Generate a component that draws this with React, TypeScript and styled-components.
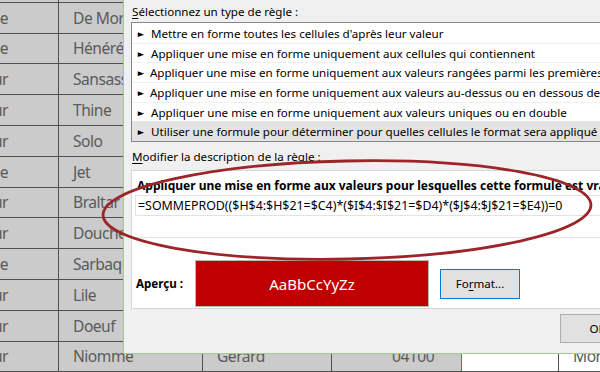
import * as React from 'react';
import styled, { createGlobalStyle } from 'styled-components';

const GlobalStyle = createGlobalStyle`
  html, body {
    margin: 0;
    padding: 0;
    width: 600px;
    height: 372px;
    overflow: hidden;
    background: #fff;
  }
`;

const Screen = styled.div`
  position: relative;
  width: 600px;
  height: 372px;
  overflow: hidden;
  font-family: "Noto Sans", "Open Sans", sans-serif;
`;

// ---- background sheet ----

const Sheet = styled.div`
  display: flex;
  flex-direction: column;
  margin-top: -28px;
`;

const SheetRow = styled.div`
  display: flex;
  height: 30.8px;
  flex: none;
  box-sizing: border-box;
  border-bottom: 1px solid #505050;
`;

const Cell = styled.div<{ $w: number; $white?: boolean; $pad?: number; $right?: boolean; $green?: boolean }>`
  flex: none;
  width: ${(p) => p.$w}px;
  box-sizing: border-box;
  display: flex;
  align-items: center;
  justify-content: ${(p) => (p.$right ? 'flex-end' : 'flex-start')};
  padding: ${(p) => (p.$right ? `0 ${p.$pad ?? 0}px 0 0` : `0 0 0 ${p.$pad ?? 0}px`)};
  overflow: hidden;
  white-space: nowrap;
  background: ${(p) => (p.$white ? '#fff' : '#cbcbcb')};
  border-right: 1px solid ${(p) => (p.$green ? '#3c8a4e' : '#505050')};
  color: #5a5a5a;
  font-size: 15.6px;
  letter-spacing: -0.5px;
`;

// ---- dialog ----

const Dialog = styled.div`
  position: absolute;
  left: 123px;
  top: -1px;
  width: 520px;
  height: 355px;
  box-sizing: border-box;
  background: #f0f0f0;
  border: 1px solid #a3c98c;
  display: flex;
  flex-direction: column;
  color: #000;
  font-size: 11.6px;
`;

const Label = styled.div<{ $h: number }>`
  height: ${(p) => p.$h}px;
  display: flex;
  align-items: center;
  padding-left: 8px;
  white-space: nowrap;
  u { text-decoration-thickness: 1px; text-underline-offset: 2px; }
`;

const ListBox = styled.div`
  margin-left: 7px;
  border: 1px solid #828790;
  border-right: none;
  background: #fff;
  display: flex;
  flex-direction: column;
`;

const ListItem = styled.div<{ $selected?: boolean }>`
  height: 19.7px;
  box-sizing: border-box;
  display: flex;
  align-items: center;
  gap: 5px;
  padding-left: 5px;
  white-space: nowrap;
  background: ${(p) => (p.$selected ? '#e3e3e3' : '#fff')};
  border-top: 1px solid ${(p) => (p.$selected ? '#e3e3e3' : '#f0f0f0')};
  &:first-child { border-top-color: #fff; }
`;

const Arrow = styled.span`
  font-size: 8px;
  width: 9px;
  transform: scaleX(1.3);
`;

const Panel = styled.div`
  margin-left: 7px;
  height: 139px;
  box-sizing: border-box;
  border: 1px solid #d6d6d6;
  border-right: none;
  background: #fff;
  display: flex;
  flex-direction: column;
  padding: 4px 0 0 3px;
`;

const PanelTitle = styled.div`
  font-weight: 700;
  font-size: 12px;
  padding-left: 2px;
  height: 20px;
  display: flex;
  align-items: center;
  white-space: nowrap;
`;

const FormulaInput = styled.div`
  height: 21px;
  box-sizing: border-box;
  border: 1px solid #e2e2e2;
  border-right: none;
  display: flex;
  align-items: center;
  padding-left: 2px;
  white-space: nowrap;
  font-size: 12.4px;
`;

const Rule = styled.div`
  margin-top: 21px;
  margin-left: -3px;
  border-top: 1px solid #e4e4e4;
`;

const PreviewRow = styled.div`
  display: flex;
  align-items: center;
  margin-top: 22px;
`;

const PreviewLabel = styled.div`
  width: 59px;
  font-weight: 700;
  padding-left: 1px;
`;

const Swatch = styled.div`
  width: 234px;
  height: 47px;
  box-sizing: border-box;
  background: #c00000;
  border: 1px solid #b8b8b8;
  color: #fff;
  font-size: 15px;
  display: flex;
  align-items: center;
  justify-content: center;
`;

const Button = styled.div<{ $focused?: boolean }>`
  height: ${(p) => (p.$focused ? 30 : 29)}px;
  width: ${(p) => (p.$focused ? 80 : 75)}px;
  box-sizing: border-box;
  background: #e1e1e1;
  border: 1px solid ${(p) => (p.$focused ? '#0078d7' : '#adadad')};
  box-shadow: ${(p) => (p.$focused ? 'inset 0 0 0 1px #e1e1e1' : 'none')};
  display: flex;
  align-items: center;
  justify-content: center;
  flex: none;
  u { text-decoration-thickness: 1px; text-underline-offset: 2px; }
`;

const FormatButton = styled(Button)`
  margin-left: 11px;
`;

const Footer = styled.div`
  display: flex;
  padding: 5px 0 0 436px;
`;

const Ellipse = styled.svg`
  position: absolute;
  left: 0;
  top: 0;
  pointer-events: none;
`;

const rows: [string, string, string, string, string][] = [
  ['Monsieur', 'Alarue', 'Paul', '13001', 'Marseille'],
  ['Madame', 'De Mortagne', 'Sylvie', '75012', 'Paris'],
  ['Madame', 'Hénérégie', 'Marie', '69003', 'Lyon'],
  ['Monsieur', 'Sansasseur', 'Alain', '31000', 'Toulouse'],
  ['Monsieur', 'Thine', 'Eglan', '06000', 'Nice'],
  ['Monsieur', 'Solo', 'Yvan', '44000', 'Nantes'],
  ['Madame', 'Jet', 'Annie', '67000', 'Strasbourg'],
  ['Monsieur', 'Braltar', 'Gilles', '34000', 'Montpellier'],
  ['Monsieur', 'Douche', 'Jean', '33000', 'Bordeaux'],
  ['Madame', 'Sarbaquane', 'Anne', '59000', 'Lille'],
  ['Monsieur', 'Lile', 'Jacques', '35000', 'Rennes'],
  ['Monsieur', 'Doeuf', 'John', '51100', 'Reims'],
  ['Monsieur', 'Niomme', 'Gerard', '04100', 'Manosque'],
];

const rules = [
  "Mettre en forme toutes les cellules d'après leur valeur",
  'Appliquer une mise en forme uniquement aux cellules qui contiennent',
  'Appliquer une mise en forme uniquement aux valeurs rangées parmi les premières ou les dernières valeurs',
  'Appliquer une mise en forme uniquement aux valeurs au-dessus ou en dessous de la moyenne',
  'Appliquer une mise en forme uniquement aux valeurs uniques ou en double',
  'Utiliser une formule pour déterminer pour quelles cellules le format sera appliqué',
];

const App = () => {
  return (
    <Screen>
      <GlobalStyle />
      <Sheet>
        {rows.map((r, i) => (
          <SheetRow key={i}>
            <Cell $w={59} $right $pad={50}>{r[0]}</Cell>
            <Cell $w={144} $pad={14}>{r[1]}</Cell>
            <Cell $w={129} $pad={14}>{r[2]}</Cell>
            <Cell $w={130} $pad={60} $green>{r[3]}</Cell>
            <Cell $w={97} $white />
            <Cell $w={120} $white $pad={14}>{i === rows.length - 1 ? 'Mon' : r[4]}</Cell>
          </SheetRow>
        ))}
      </Sheet>

      <Dialog>
        <Label $h={22}><span><u>S</u>électionnez un type de règle :</span></Label>
        <ListBox>
          {rules.map((t, i) => (
            <ListItem key={i} $selected={i === rules.length - 1}>
              <Arrow>►</Arrow>
              {t}
            </ListItem>
          ))}
        </ListBox>
        <Label $h={28}><span><u>M</u>odifier la description de la règle :</span></Label>
        <Panel>
          <PanelTitle>Appliquer une mise en forme aux valeurs pour lesquelles cette formule est vraie :</PanelTitle>
          <FormulaInput>=SOMMEPROD(($H$4:$H$21=$C4)*($I$4:$I$21=$D4)*($J$4:$J$21=$E4))=0</FormulaInput>
          <Rule />
          <PreviewRow>
            <PreviewLabel>Aperçu :</PreviewLabel>
            <Swatch>AaBbCcYyZz</Swatch>
            <FormatButton $focused>Fo<u>r</u>mat...</FormatButton>
          </PreviewRow>
        </Panel>
        <Footer>
          <Button>OK</Button>
        </Footer>
      </Dialog>

      <Ellipse width="600" height="372" viewBox="0 0 600 372">
        <ellipse cx="347" cy="210" rx="244" ry="49" fill="none" stroke="#9c2529" strokeWidth="2.8" transform="rotate(-1.2 347 210)" />
      </Ellipse>
    </Screen>
  );
};

export default App;
